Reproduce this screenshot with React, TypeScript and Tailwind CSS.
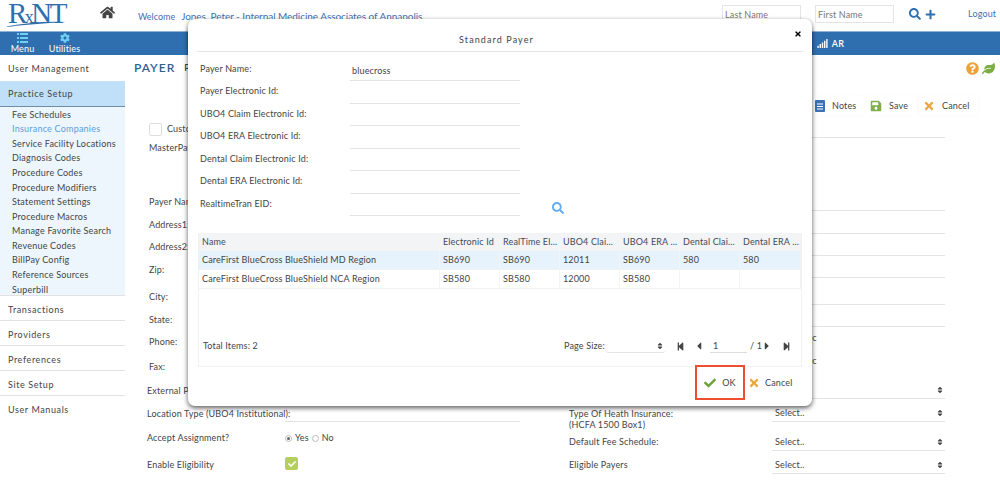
import React from 'react';
import {
    FaHome, FaSearch, FaPlus, FaCog, FaQuestionCircle, FaLeaf, FaCheck, FaTimes, FaSave,
    FaSignal, FaSort, FaStepBackward, FaStepForward, FaCaretLeft, FaCaretRight
} from 'react-icons/fa';

const subItems = [
    'Fee Schedules', 'Insurance Companies', 'Service Facility Locations', 'Diagnosis Codes', 'Procedure Codes',
    'Procedure Modifiers', 'Statement Settings', 'Procedure Macros', 'Manage Favorite Search', 'Revenue Codes',
    'BillPay Config', 'Reference Sources', 'Superbill'
];

const leftRows = [
    { label: 'MasterPayer:', h: 'h-[20px]' },
    { label: '', h: 'h-[32px]' },
    { label: 'Payer Name:', h: 'h-[24px]' },
    { label: 'Address1:', h: 'h-[22px]' },
    { label: 'Address2:', h: 'h-[22px]' },
    { label: 'Zip:', h: 'h-[24px]' },
    { label: 'City:', h: 'h-[30px]' },
    { label: 'State:', h: 'h-[16px]' },
    { label: 'Phone:', h: 'h-[28px]' },
    { label: 'Fax:', h: 'h-[22px]' },
];

const rightLines = ['h-[18px]', 'h-[73px]', 'h-[23px]', 'h-[22px]', 'h-[22px]', 'h-[27px]', 'h-[22px]'];

const modalLabels = [
    'Payer Electronic Id:', 'UBO4 Claim Electronic Id:', 'UBO4 ERA Electronic Id:',
    'Dental Claim Electronic Id:', 'Dental ERA Electronic Id:', 'RealtimeTran EID:'
];

const columns = [
    { name: 'Name', w: 'w-[241px]' },
    { name: 'Electronic Id', w: 'w-[60px]' },
    { name: 'RealTime El...', w: 'w-[60px]' },
    { name: 'UBO4 Clai...', w: 'w-[60px]' },
    { name: 'UBO4 ERA ...', w: 'w-[60px]' },
    { name: 'Dental Clai...', w: 'w-[60px]' },
    { name: 'Dental ERA ...', w: 'w-[61px]' },
];

const gridRows = [
    ['CareFirst BlueCross BlueShield MD Region', 'SB690', 'SB690', '12011', 'SB690', '580', '580'],
    ['CareFirst BlueCross BlueShield NCA Region', 'SB580', 'SB580', '12000', 'SB580', '', ''],
];

export default function App() {
    return (
        <div className="relative h-[486px] w-[1000px] overflow-hidden bg-white font-['Lato',sans-serif] text-[9px] tracking-[0.15px] text-[#444]">
            <TopHeader />
            <NavBar />
            <div className="flex">
                <Sidebar />
                <PayerForm />
            </div>
            <StandardPayerModal />
        </div>
    );
}

function TopHeader() {
    return (
        <header className="flex h-[31px] items-start">
            <div className="relative h-[30px] w-[92px] pl-[8px] font-['Liberation_Serif',serif] text-[29px] leading-[26px] tracking-[-2.5px] text-[#2f6fae]">
                R<span className="text-[18px]">x</span>NT
                <svg className="absolute left-[4px] top-[21px]" width="62" height="7" viewBox="0 0 62 7">
                    <path d="M0 6 C20 2 40 0 62 1 C40 2 20 4 0 6Z" fill="#2f6fae" />
                </svg>
            </div>
            <FaHome className="mt-[5px] ml-[8px] text-[15px] text-[#444]" />
            <div className="ml-[23px] mt-[9px] flex items-baseline text-[#3f6fb5]">
                <span className="tracking-[0px]">Welcome</span>
                <span className="ml-[6px] text-[10px] tracking-[-0.05px]">Jones, Peter - Internal Medicine Associates of Annapolis</span>
            </div>
            <div className="ml-auto mt-[5px] flex items-center">
                <input placeholder="Last Name" className="h-[18px] w-[79px] border border-[#e4e4e4] px-[2px] placeholder:text-[#777]" />
                <input placeholder="First Name" className="ml-[14px] h-[18px] w-[79px] border border-[#e4e4e4] px-[2px] placeholder:text-[#777]" />
                <FaSearch className="ml-[15px] text-[12px] text-[#2f6fb0]" />
                <FaPlus className="ml-[4px] text-[11px] text-[#2f6fb0]" />
                <span className="ml-[32px] w-[32px] text-[#3f6fb5]">Logout</span>
            </div>
        </header>
    );
}

function NavBar() {
    return (
        <nav className="flex h-[24px] items-center border-t border-[#8fb2d4] bg-[#2f6fb0] text-white">
            <div className="ml-[12px] flex w-[21px] flex-col items-center">
                <svg width="11" height="10" viewBox="0 0 11 10" className="text-[#6fd0f2]">
                    <g fill="currentColor">
                        <rect x="0" y="0" width="2" height="2" /><rect x="3" y="0" width="8" height="2" />
                        <rect x="0" y="4" width="2" height="2" /><rect x="3" y="4" width="8" height="2" />
                        <rect x="0" y="8" width="2" height="2" /><rect x="3" y="8" width="8" height="2" />
                    </g>
                </svg>
                <span className="leading-[11px]">Menu</span>
            </div>
            <div className="ml-[17px] flex w-[29px] flex-col items-center">
                <FaCog className="text-[10px] text-[#6fd0f2]" />
                <span className="leading-[11px]">Utilities</span>
            </div>
            <div className="ml-auto mr-[156px] flex items-center gap-[4px] font-semibold">
                <FaSignal className="text-[11px]" />
                <span>AR</span>
            </div>
        </nav>
    );
}

function SideTitle({ title }: { title: string }) {
    return (
        <div className="flex h-[25px] items-center border-b border-[#e2e2e2] pl-[8px] pt-[3px] tracking-[0.6px] last:border-b-0">
            {title}
        </div>
    );
}

function Sidebar() {
    return (
        <aside className="w-[125px] shrink-0">
            <div className="flex h-[26px] items-center pl-[8px] pt-[1px] tracking-[0.6px]">User Management</div>
            <div className="flex h-[26px] items-center border-b border-[#6f8da6] bg-[#bfe0f8] pl-[8px] pt-[1px] tracking-[0.6px]">Practice Setup</div>
            <ul className="h-[189px] border-b border-[#e2e2e2] bg-[#edf6fd] pl-[12px]">
                {subItems.map((item) => (
                    <li key={item} className={`flex h-[14.6px] items-center whitespace-nowrap tracking-[0.22px] ${item === 'Insurance Companies' ? 'text-[#5a9fd8]' : ''}`}>
                        {item}
                    </li>
                ))}
            </ul>
            {['Transactions', 'Providers', 'Preferences', 'Site Setup', 'User Manuals'].map((t) => (
                <SideTitle key={t} title={t} />
            ))}
        </aside>
    );
}

function ToolButton({ icon, label, w }: { icon: React.ReactNode; label: string; w: string }) {
    return (
        <div className={`flex h-[21px] items-center gap-[7px] rounded-sm pl-[4px] shadow-[0_0_2px_rgba(0,0,0,0.06)] ${w}`}>
            {icon}
            <span>{label}</span>
        </div>
    );
}

function PlainRow({ label, h }: { label: string; h: string }) {
    return <div className={`flex items-center pl-[2px] ${h}`}>{label}</div>;
}

function SelectRow({ label, h, sub }: { label: string; h: string; sub?: string }) {
    return (
        <div className={`flex items-end ${h}`}>
            <div className={`w-[203px] pb-[4px] leading-[11px] ${sub ? '-mb-[12px]' : ''}`}>
                {label}
                {sub && <div>{sub}</div>}
            </div>
            <div className="flex h-full flex-1 items-end justify-between border-b border-[#e4e4e4] pb-[3px] pl-[3px] pr-[1px]">
                <span className="leading-[11px]">{h === 'h-[26px]' ? '' : 'Select..'}</span>
                <FaSort className="mb-[1px] text-[8px] text-[#444]" />
            </div>
        </div>
    );
}

function PayerForm() {
    return (
        <main className="flex-1 pl-[9px]">
            <div className="flex h-[26px] items-center pr-[5px]">
                <span className="text-[12px] font-semibold tracking-[1px] text-[#2f5f8f]">PAYER</span>
                <span className="ml-[9px] font-semibold">Payer</span>
                <FaQuestionCircle className="ml-auto text-[13px] text-[#eda33a]" />
                <FaLeaf className="ml-[3px] text-[13px] text-[#7cae45]" />
            </div>
            <div className="mt-[14px] flex justify-end gap-[2px] pr-[22px]">
                <ToolButton
                    w="w-[53px]"
                    label="Notes"
                    icon={
                        <svg width="10" height="12" viewBox="0 0 10 12">
                            <rect width="10" height="12" rx="1" fill="#3a72b5" />
                            <path d="M2 4h6M2 6.5h6M2 9h6" stroke="#fff" strokeWidth="1" />
                        </svg>
                    }
                />
                <ToolButton w="w-[51px]" label="Save" icon={<FaSave className="text-[12px] text-[#7fae4b]" />} />
                <ToolButton w="w-[59px]" label="Cancel" icon={<FaTimes className="text-[12px] text-[#eba53c]" />} />
            </div>
            <div className="mt-[4px] grid grid-cols-[422px_377px] pl-[13px]">
                <div>
                    <div className="flex h-[18px] items-center gap-[4px] pl-[2px]">
                        <span className="h-[13px] w-[13px] rounded-[2px] border border-[#ddd]" />
                        <span className="ml-[1px]">Custom</span>
                    </div>
                    {leftRows.map((r, i) => (
                        <PlainRow key={i} label={r.label} h={r.h} />
                    ))}
                    <div className="flex h-[26px] items-center">External Payer:</div>
                    <div className="flex h-[20px] items-center">
                        <span className="w-[138px] whitespace-nowrap">Location Type (UBO4 Institutional):</span>
                        <span className="h-[18px] w-[235px] self-start border-b border-[#e4e4e4]" />
                    </div>
                    <div className="flex h-[28px] items-center">
                        <span className="w-[138px]">Accept Assignment?</span>
                        <span className="flex h-[7px] w-[7px] items-center justify-center rounded-full border border-[#bbb]">
                            <span className="h-[3px] w-[3px] rounded-full bg-[#666]" />
                        </span>
                        <span className="ml-[3px]">Yes</span>
                        <span className="ml-[3px] h-[7px] w-[7px] rounded-full border border-[#bbb]" />
                        <span className="ml-[3px]">No</span>
                    </div>
                    <div className="flex h-[26px] items-center">
                        <span className="w-[138px]">Enable Eligibility</span>
                        <span className="mb-[3px] flex h-[13px] w-[13px] items-center justify-center rounded-[2px] bg-[#b5cf5f]">
                            <FaCheck className="text-[8px] text-white" />
                        </span>
                    </div>
                </div>
                <div className="pr-[1px]">
                    {rightLines.map((h, i) => (
                        <div key={i} className={`${h} ml-[203px] border-b border-[#e4e4e4]`} />
                    ))}
                    <div className="ml-[207px] flex h-[22px] items-center">Electronic</div>
                    <div className="ml-[207px] flex h-[24px] items-center">Electronic</div>
                    <SelectRow label="" h="h-[26px]" />
                    <SelectRow label="Type Of Heath Insurance:" sub="(HCFA 1500 Box1)" h="h-[23px]" />
                    <SelectRow label="Default Fee Schedule:" h="h-[29px]" />
                    <SelectRow label="Eligible Payers" h="h-[23px]" />
                </div>
            </div>
        </main>
    );
}

function StandardPayerModal() {
    return (
        <div className="absolute left-[188px] top-[19px] flex h-[387px] w-[624px] flex-col rounded-[7px] bg-white px-[9px] shadow-[0_2px_5px_rgba(0,0,0,0.65)]">
            <div className="relative flex h-[33px] shrink-0 items-center justify-center border-b border-[#e4e4e4] pr-[7px] pt-[9px] text-[9px] tracking-[1.1px]">
                Standard Payer
                <FaTimes className="absolute right-[1px] top-[11px] text-[8px] text-black" />
            </div>
            <div className="relative">
                <div className="flex h-[29px] items-start">
                    <span className="mt-[10px] w-[153px] pl-[3px]">Payer Name:</span>
                    <span className="flex h-[29px] w-[170px] items-end border-b border-[#e4e4e4] pb-[3px] pl-[2px]">bluecross</span>
                </div>
                {modalLabels.map((label) => (
                    <div key={label} className="flex h-[22.5px] items-start">
                        <span className="mt-[3px] w-[153px] pl-[3px]">{label}</span>
                        <span className="h-[22.5px] w-[170px] border-b border-[#e4e4e4]" />
                    </div>
                ))}
                <FaSearch className="absolute left-[355px] top-[150px] text-[12px] text-[#62aef0]" />
            </div>
            <div className="mx-px mt-[17px] h-[134px] border border-t-0 border-[#f1f1f1]">
                <div className="flex h-[18px] items-center bg-[#f3f4f6] text-[#3d4a5a]">
                    {columns.map((c) => (
                        <span key={c.name} className={`${c.w} overflow-hidden whitespace-nowrap pl-[3px]`}>{c.name}</span>
                    ))}
                </div>
                {gridRows.map((row, i) => (
                    <div key={i} className={`flex h-[19px] border-b border-[#f1f1f1] ${i === 0 ? 'bg-[#e6f3fc]' : ''}`}>
                        {row.map((cell, j) => (
                            <span key={j} className={`${columns[j].w} flex items-center overflow-hidden whitespace-nowrap border-r border-[#f4f4f4] pl-[3px]`}>{cell}</span>
                        ))}
                    </div>
                ))}
                <div className="mt-[50px] flex items-center pl-[4px]">
                    <span className="w-[361px]">Total Items: 2</span>
                    <span className="w-[41px]">Page Size:</span>
                    <span className="flex h-[14px] w-[61px] items-center justify-end rounded-sm border-b border-[#e4e4e4] pr-[2px]">
                        <FaSort className="text-[8px]" />
                    </span>
                    <FaStepBackward className="ml-[10px] text-[9px]" />
                    <FaCaretLeft className="ml-[8px] text-[12px]" />
                    <span className="ml-[5px] h-[14px] w-[37px] border-b border-[#ddd] pl-[3px] leading-[14px]">1</span>
                    <span className="ml-[3px] w-[10px] whitespace-nowrap">/ 1</span>
                    <FaCaretRight className="ml-[1px] text-[12px]" />
                    <FaStepForward className="ml-[9px] text-[9px]" />
                </div>
            </div>
            <div className="-mt-[2px] flex justify-end">
                <div className="flex h-[35px] w-[50px] items-center justify-center gap-[6px] border-2 border-[#f04e30]">
                    <FaCheck className="text-[12px] text-[#6ea33c]" />
                    <span>OK</span>
                </div>
                <div className="ml-[3px] flex h-[35px] w-[55px] items-center gap-[5px]">
                    <FaTimes className="text-[12px] text-[#eba53c]" />
                    <span>Cancel</span>
                </div>
            </div>
        </div>
    );
}
